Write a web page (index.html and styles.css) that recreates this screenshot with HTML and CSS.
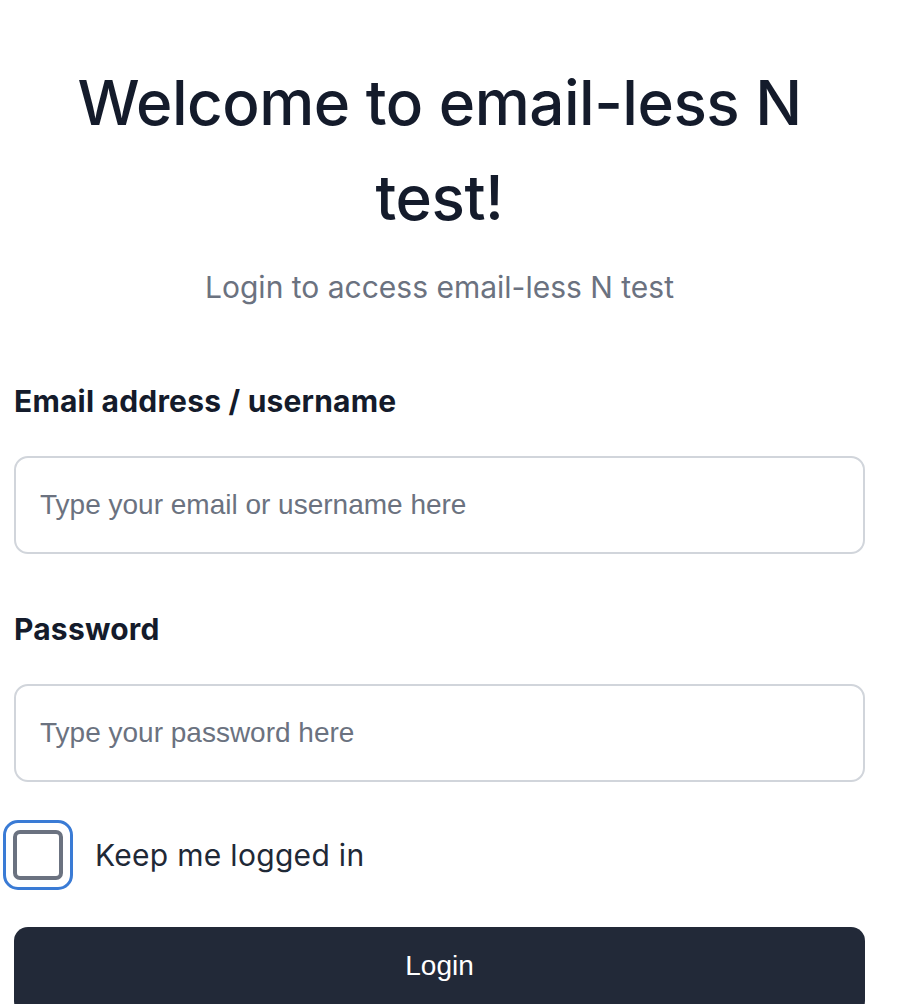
FILE: index.html
```html
<!DOCTYPE html>
<html lang="en">
<head>
<meta charset="UTF-8">
<meta name="viewport" content="width=device-width, initial-scale=1.0">
<title>Login</title>
<link rel="stylesheet" href="styles.css">
</head>
<body>

<!-- Login form -->
<div class="login">
    <h1 class="titulo">Welcome to email-less N test!</h1>
    <p class="subtitulo">Login to access email-less N test</p>

    <form class="form">
        <label class="etiqueta" for="usuario">Email address / username</label>
        <input class="campo" id="usuario" type="text" placeholder="Type your email or username here">

        <label class="etiqueta" for="clave">Password</label>
        <input class="campo" id="clave" type="password" placeholder="Type your password here">

        <div class="recordar">
            <span class="caja"><span class="caja-interior"></span></span>
            <span class="recordar-texto">Keep me logged in</span>
        </div>

        <button class="boton" type="button">Login</button>
    </form>
</div>

</body>
</html>
```

FILE: styles.css
```css
body {
    margin: 0;
    padding: 0;
    background: #fff;
    font-family: Inter, "Noto Sans", sans-serif;
    color: #111827;
}

.login {
    width: 851px;
    padding: 0 0 0 14px;
}

.titulo {
    margin: 0;
    padding-top: 55px;
    padding-left: 60px;
    padding-right: 60px;
    font-size: 62px;
    line-height: 95px;
    font-weight: 500;
    text-align: center;
    color: #141b2b;
    letter-spacing: -0.5px;
}

.subtitulo {
    margin: 24px 0 0;
    font-size: 30px;
    line-height: 36px;
    text-align: center;
    color: #6b7280;
}

.form {
    display: flex;
    flex-direction: column;
    margin-top: 78px;
}

.etiqueta {
    font-size: 30px;
    line-height: 36px;
    font-weight: 700;
    color: #141b2b;
    letter-spacing: 0.2px;
}

.campo {
    margin-top: 37px;
    margin-bottom: 57px;
    height: 98px;
    box-sizing: border-box;
    border: 2px solid #d1d5db;
    border-radius: 14px;
    padding: 0 24px;
    font-family: "Liberation Sans", Arial, sans-serif;
    font-size: 28px;
    color: #111827;
    outline: none;
}

.campo:last-of-type {
    margin-bottom: 0;
}

.campo::placeholder {
    color: #6b7280;
}

.recordar {
    display: flex;
    align-items: center;
    gap: 22px;
    margin-top: 38px;
    margin-left: -11px;
}

.caja {
    width: 70px;
    height: 70px;
    box-sizing: border-box;
    border: 3px solid #3a7bd5;
    border-radius: 15px;
    display: flex;
    align-items: center;
    justify-content: center;
}

.caja-interior {
    width: 50px;
    height: 50px;
    box-sizing: border-box;
    border: 4px solid #6b7280;
    border-radius: 7px;
}

.recordar-texto {
    font-size: 30px;
    color: #1f2937;
    letter-spacing: 0.3px;
}

.boton {
    margin-top: 37px;
    height: 88px;
    border: none;
    border-radius: 14px;
    background: #222938;
    color: #fff;
    font-family: "Liberation Sans", Arial, sans-serif;
    font-size: 28px;
    padding-bottom: 12px;
    cursor: pointer;
}
```
